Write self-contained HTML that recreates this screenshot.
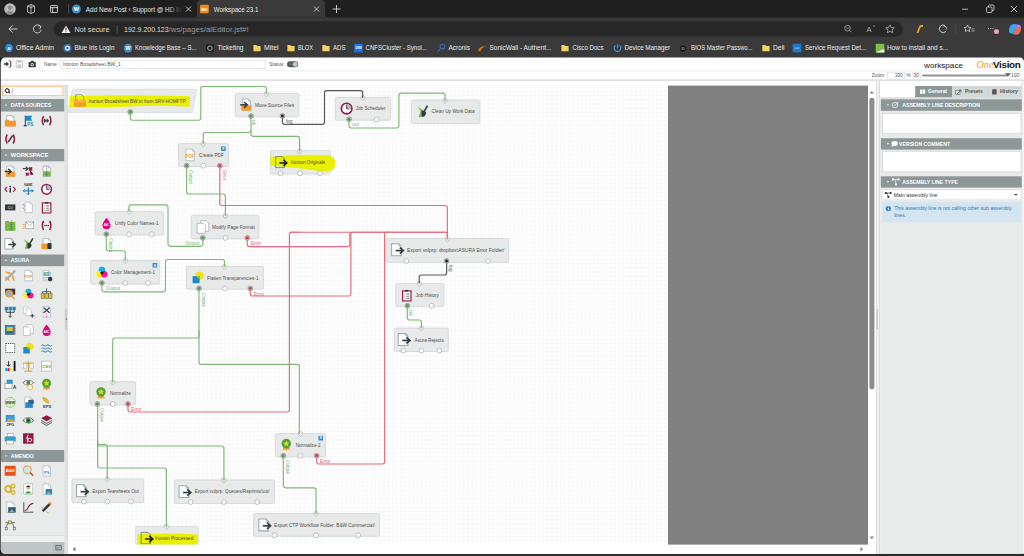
<!DOCTYPE html>
<html><head><meta charset="utf-8"><title>Workspace 23.1</title>
<style>html,body{margin:0;padding:0;background:#1c1c1c;overflow:hidden;width:1024px;height:556px}svg{display:block}</style>
</head><body>
<svg width="1024" height="556" viewBox="0 0 1024 556" font-family="Liberation Sans, sans-serif">
<rect x="0.00" y="0.00" width="1024.00" height="17.60" fill="#1f1f1f" />
<rect x="0.00" y="17.60" width="1024.00" height="40.40" fill="#3a3a3a" />
<path d="M193,17.6 Q197,17.6 197,13.6 V4 Q197,0 201,0 H321 Q325,0 325,4 V13.6 Q325,17.6 329,17.6 Z" fill="#3a3a3a" />
<circle cx="10.00" cy="9.00" r="5.80" fill="#b9b9b9" />
<circle cx="10.00" cy="7.60" r="2.20" fill="#8a8a8a" />
<path d="M6.2,12.8 Q10,8.5 13.8,12.8 Q10,15.5 6.2,12.8Z" fill="#8a8a8a" />
<path d="M27.5,6 L31,4.5 L34.5,6 V12 L31,13.5 L27.5,12Z M31,4.5 V13.5 M27.5,6 L31,7.5 L34.5,6" fill="none" stroke="#cfcfcf" stroke-width="0.8" />
<rect x="50.50" y="5.50" width="7.00" height="7.00" fill="none" stroke="#d8d8d8" stroke-width="0.9" rx="0.8" />
<line x1="50.50" y1="7.60" x2="57.50" y2="7.60" stroke="#d8d8d8" stroke-width="0.9" />
<line x1="52.60" y1="7.60" x2="52.60" y2="12.50" stroke="#d8d8d8" stroke-width="0.9" />
<line x1="68.60" y1="4.00" x2="68.60" y2="14.00" stroke="#555" stroke-width="0.8" />
<circle cx="76.40" cy="9.00" r="4.50" fill="#3d8ec8" />
<text x="76.40" y="10.97" font-size="5.50" fill="#fff" font-weight="bold" text-anchor="middle" >W</text>
<defs><linearGradient id="fade" gradientUnits="userSpaceOnUse" x1="168" y1="0" x2="182" y2="0"><stop offset="0" stop-color="#e6e6e6"/><stop offset="1" stop-color="#e6e6e6" stop-opacity="0"/></linearGradient></defs>
<clipPath id="tabclip"><rect x="80" y="0" width="102" height="18"/></clipPath><g clip-path="url(#tabclip)">
<text x="85.80" y="11.74" font-size="6.60" fill="url(#fade)" textLength="108" lengthAdjust="spacingAndGlyphs">Add New Post ‹ Support @ HD Media</text>
</g>
<path d="M186,6.5 L191,11.5 M191,6.5 L186,11.5" fill="none" stroke="#d0d0d0" stroke-width="0.9" />
<rect x="200.00" y="4.70" width="8.80" height="8.60" fill="#f08a10" rx="1" />
<text x="204.40" y="10.73" font-size="4.50" fill="#fff" font-weight="bold" text-anchor="middle" >wo</text>
<text x="213.80" y="11.74" font-size="6.60" fill="#ececec" textLength="44.6" lengthAdjust="spacingAndGlyphs">Workspace 23.1</text>
<path d="M314,6.5 L319,11.5 M319,6.5 L314,11.5" fill="none" stroke="#d0d0d0" stroke-width="0.9" />
<path d="M336.5,5 V13 M332.5,9 H340.5" fill="none" stroke="#d8d8d8" stroke-width="0.9" />
<line x1="962.00" y1="9.20" x2="968.00" y2="9.20" stroke="#d8d8d8" stroke-width="0.8" />
<rect x="986.50" y="7.00" width="5.50" height="5.50" fill="none" stroke="#d8d8d8" stroke-width="0.8" rx="1" />
<path d="M988.5,7 V6 Q988.5,5 989.5,5 H993 Q994,5 994,6 V9.5 Q994,10.5 993,10.5 H992" fill="none" stroke="#d8d8d8" stroke-width="0.8" />
<path d="M1011,6 L1017,12 M1017,6 L1011,12" fill="none" stroke="#d8d8d8" stroke-width="0.8" />
<path d="M9.5,29 H17.5 M12.5,25.5 L9,29 L12.5,32.5" fill="none" stroke="#d8d8d8" stroke-width="0.9" />
<path d="M40.5,26.5 A4,4 0 1 0 41.2,30" fill="none" stroke="#d8d8d8" stroke-width="0.9" />
<path d="M38.5,25 L41,26.6 L39.6,29" fill="none" stroke="#d8d8d8" stroke-width="0.9" />
<path d="M61,21 H895 A8,8 0 0 1 895,37 H61 A8,8 0 0 1 61,21Z" fill="#272727" stroke="#3e3e3e" stroke-width="0.6" />
<path d="M66,25.5 L70.5,33 H61.5Z" fill="#eeeeee" />
<line x1="66.00" y1="27.60" x2="66.00" y2="30.60" stroke="#272727" stroke-width="0.9" />
<circle cx="66.00" cy="31.80" r="0.50" fill="#272727" />
<text x="74.50" y="31.86" font-size="7.24" fill="#dedede" >Not secure</text>
<line x1="117.20" y1="25.00" x2="117.20" y2="33.00" stroke="#5a5a5a" stroke-width="0.8" />
<text x="124.00" y="31.92" font-size="7.40" fill="#dedede" textLength="44.6" lengthAdjust="spacingAndGlyphs">192.9.200.123</text>
<text x="168.60" y="31.92" font-size="7.40" fill="#9a9a9a" textLength="80" lengthAdjust="spacingAndGlyphs">/ws/pages/alEditor.jsf#!</text>
<circle cx="847.50" cy="28.20" r="2.80" fill="none" stroke="#a8a8a8" stroke-width="0.8" />
<line x1="849.50" y1="30.20" x2="851.50" y2="32.20" stroke="#a8a8a8" stroke-width="0.8" />
<line x1="846.20" y1="28.20" x2="848.80" y2="28.20" stroke="#a8a8a8" stroke-width="0.7" />
<text x="869.00" y="32.05" font-size="7.50" fill="#b0b0b0" text-anchor="middle" >A</text>
<text x="873.00" y="27.19" font-size="3.50" fill="#b0b0b0" >a</text>
<path d="M890,24.8 L891.3,27.6 L894.3,27.9 L892,29.9 L892.7,32.8 L890,31.3 L887.3,32.8 L888,29.9 L885.7,27.9 L888.7,27.6Z" fill="none" stroke="#b8b8b8" stroke-width="0.8" />
<path d="M917.5,33 L919.5,27.5 Q920,26 921.5,26 H923" fill="none" stroke="#f0a020" stroke-width="1.8" />
<path d="M945,25.5 A3.8,3.8 0 1 0 945.8,31.5" fill="none" stroke="#d0d0d0" stroke-width="1.0" />
<path d="M943.5,27 A1.6,1.6 0 1 1 946,29.5" fill="none" stroke="#d0d0d0" stroke-width="0.8" />
<line x1="955.80" y1="24.50" x2="955.80" y2="33.50" stroke="#555" stroke-width="0.7" />
<path d="M967.5,25 L968.6,27.3 L971,27.6 L969.2,29.2 L969.7,31.6 L967.5,30.4 L965.3,31.6 L965.8,29.2 L964,27.6 L966.4,27.3Z" fill="none" stroke="#d0d0d0" stroke-width="0.8" />
<line x1="971.50" y1="29.00" x2="974.50" y2="29.00" stroke="#d0d0d0" stroke-width="0.7" />
<line x1="971.50" y1="31.00" x2="974.50" y2="31.00" stroke="#d0d0d0" stroke-width="0.7" />
<circle cx="988.50" cy="28.50" r="0.60" fill="#d0d0d0" />
<circle cx="990.80" cy="28.50" r="0.60" fill="#d0d0d0" />
<circle cx="993.10" cy="28.50" r="0.60" fill="#d0d0d0" />
<circle cx="996.50" cy="31.50" r="2.60" fill="#e38a96" />
<text x="996.50" y="32.69" font-size="3.20" fill="#fff" text-anchor="middle" >8</text>
<path d="M1010,26 Q1012,23.5 1015,24 L1019.5,25 Q1021.5,26 1021,29 L1019.5,33 Q1018,35 1015.5,34.5 L1011,33.5 Q1008.5,32.5 1009,29.5Z" fill="#6a7ef0" />
<path d="M1013,24.2 L1016.5,25 L1014,31 Q1013,33.5 1010.5,33 Q1008.5,32 1009.5,29Z" fill="#27b4e8" />
<path d="M1016,27 L1021,28.5 Q1021,31 1019.5,33 Q1018,35 1015.5,34.5 L1013.5,34Z" fill="#f06a50" />
<path d="M1017,24.5 L1019.5,25 Q1021,26 1021,28 L1016,27Z" fill="#b080e8" />
<path d="M7,44.1 H11 L13.2,48.1 L11,52.1 H7 L4.8,48.1Z" fill="#2a8ae0" />
<text x="9.00" y="49.52" font-size="3.60" fill="#fff" font-weight="bold" text-anchor="middle" >AI</text>
<text x="16.00" y="50.48" font-size="7.00" fill="#ececec" textLength="38" lengthAdjust="spacingAndGlyphs">Office Admin</text>
<circle cx="67.50" cy="48.10" r="4.00" fill="#3b6fb6" />
<circle cx="67.50" cy="48.10" r="2.60" fill="#c8dcf0" />
<circle cx="67.50" cy="48.10" r="1.20" fill="#3b6fb6" />
<text x="74.50" y="50.48" font-size="7.00" fill="#ececec" textLength="40" lengthAdjust="spacingAndGlyphs">Blue Iris Login</text>
<circle cx="128.00" cy="48.10" r="4.30" fill="#3d8ec8" />
<text x="128.00" y="50.00" font-size="5.30" fill="#fff" font-weight="bold" text-anchor="middle" >W</text>
<text x="135.00" y="50.48" font-size="7.00" fill="#ececec" textLength="61.5" lengthAdjust="spacingAndGlyphs">Knowledge Base – S...</text>
<rect x="206.00" y="44.10" width="8.00" height="8.00" fill="#1f1f1f" rx="1.5" />
<circle cx="210.00" cy="48.10" r="2.30" fill="none" stroke="#cfcfcf" stroke-width="0.8" />
<text x="217.50" y="50.48" font-size="7.00" fill="#ececec" textLength="26" lengthAdjust="spacingAndGlyphs">Ticketing</text>
<path d="M253.4,45.1 H256.2 L257.2,46.1 H260.6 V51.300000000000004 H253.4Z" fill="#f4d35e" />
<text x="264.00" y="50.48" font-size="7.00" fill="#ececec" textLength="14.5" lengthAdjust="spacingAndGlyphs">Mitel</text>
<path d="M287.4,45.1 H290.2 L291.2,46.1 H294.6 V51.300000000000004 H287.4Z" fill="#f4d35e" />
<text x="298.00" y="50.48" font-size="7.00" fill="#ececec" textLength="15" lengthAdjust="spacingAndGlyphs">BLOX</text>
<path d="M322.4,45.1 H325.2 L326.2,46.1 H329.6 V51.300000000000004 H322.4Z" fill="#f4d35e" />
<text x="333.00" y="50.48" font-size="7.00" fill="#ececec" textLength="12.5" lengthAdjust="spacingAndGlyphs">ADS</text>
<rect x="354.20" y="43.80" width="8.60" height="8.60" fill="#1a73e8" />
<text x="358.50" y="49.25" font-size="2.80" fill="#fff" font-weight="bold" text-anchor="middle" >DSM</text>
<text x="365.50" y="50.48" font-size="7.00" fill="#ececec" textLength="61.5" lengthAdjust="spacingAndGlyphs">CNFSCluster - Synol...</text>
<circle cx="442.50" cy="46.60" r="2.30" fill="none" stroke="#3a6ab8" stroke-width="1.1" />
<line x1="440.80" y1="48.30" x2="437.50" y2="51.90" stroke="#3a6ab8" stroke-width="1.2" />
<text x="448.50" y="50.48" font-size="7.00" fill="#ececec" textLength="21.5" lengthAdjust="spacingAndGlyphs">Acronis</text>
<path d="M478.2,51.1 Q479,45.6 486,46.6 Q481,47.6 480.5,51.6Z" fill="#f07010" />
<text x="489.50" y="50.48" font-size="7.00" fill="#ececec" textLength="62" lengthAdjust="spacingAndGlyphs">SonicWall - Authent...</text>
<path d="M561.4,45.1 H564.2 L565.2,46.1 H568.6 V51.300000000000004 H561.4Z" fill="#f4d35e" />
<text x="572.50" y="50.48" font-size="7.00" fill="#ececec" textLength="31" lengthAdjust="spacingAndGlyphs">Cisco Docs</text>
<path d="M615.4,45.5 A3.3,3.3 0 1 0 619.6,45.5" fill="none" stroke="#3a9ae8" stroke-width="1.1" />
<line x1="617.50" y1="44.10" x2="617.50" y2="48.40" stroke="#3a9ae8" stroke-width="1.1" />
<text x="624.50" y="50.48" font-size="7.00" fill="#ececec" textLength="45.5" lengthAdjust="spacingAndGlyphs">Device Manager</text>
<circle cx="683.00" cy="48.60" r="3.20" fill="#1b1b1b" />
<text x="683.00" y="49.59" font-size="3.50" fill="#d8d8d8" text-anchor="middle" >ID</text>
<text x="691.00" y="50.48" font-size="7.00" fill="#ececec" textLength="61.5" lengthAdjust="spacingAndGlyphs">BIOS Master Passwo...</text>
<path d="M762.4,45.1 H765.2 L766.2,46.1 H769.6 V51.300000000000004 H762.4Z" fill="#f4d35e" />
<text x="773.00" y="50.48" font-size="7.00" fill="#ececec" textLength="11.5" lengthAdjust="spacingAndGlyphs">Dell</text>
<rect x="792.70" y="43.80" width="8.60" height="8.60" fill="#1e78d0" />
<line x1="794.50" y1="48.10" x2="799.50" y2="48.10" stroke="#cfe0f5" stroke-width="0.7" />
<text x="805.00" y="50.48" font-size="7.00" fill="#ececec" textLength="61" lengthAdjust="spacingAndGlyphs">Service Request Det...</text>
<rect x="875.70" y="43.80" width="8.60" height="8.60" fill="#7cc04a" />
<path d="M875.7,52.4 L884.3,49.1 V52.4Z" fill="#fff" />
<text x="887.00" y="50.48" font-size="7.00" fill="#ececec" textLength="61" lengthAdjust="spacingAndGlyphs">How to install and s...</text>
<rect x="0.00" y="553.00" width="1024.00" height="3.00" fill="#2c2c2c" />
<path d="M1,62 Q1,57.5 5.5,57.5 H1019.5 Q1024,57.5 1024,62 V549.5 Q1024,553.8 1019.5,553.8 H5.5 Q1,553.8 1,549.5Z" fill="#ffffff" />
<line x1="0.50" y1="62.00" x2="0.50" y2="550.00" stroke="#5e5e5e" stroke-width="1" />
<line x1="13.40" y1="58.00" x2="13.40" y2="69.50" stroke="#e4e4e4" stroke-width="0.7" />
<line x1="25.90" y1="58.00" x2="25.90" y2="69.50" stroke="#e4e4e4" stroke-width="0.7" />
<line x1="38.60" y1="58.00" x2="38.60" y2="69.50" stroke="#e4e4e4" stroke-width="0.7" />
<path d="M3.8,63.2 H6.2 V61.4 L9,64 L6.2,66.6 V64.8 H3.8Z" fill="#3a3a3a" />
<path d="M8.8,60.8 H9.6 Q10.8,60.8 10.8,62 V66 Q10.8,67.2 9.6,67.2 H8.8" fill="none" stroke="#3a3a3a" stroke-width="1.0" />
<rect x="16.20" y="60.40" width="6.40" height="7.20" fill="none" stroke="#c0c0c0" stroke-width="0.9" rx="0.6" />
<rect x="17.60" y="60.50" width="3.60" height="2.10" fill="#c0c0c0" />
<rect x="17.60" y="64.60" width="3.60" height="2.80" fill="#c8c8c8" />
<path d="M28.6,62 H30.6 L31.4,60.8 H33.4 L34.2,62 H35.8 V67.2 H28.6Z" fill="#3a3a3a" />
<circle cx="32.20" cy="64.60" r="1.60" fill="#ffffff" />
<circle cx="32.20" cy="64.60" r="0.90" fill="#3a3a3a" />
<text x="44.00" y="65.82" font-size="4.75" fill="#555" >Name:</text>
<rect x="60.30" y="60.30" width="204.90" height="8.30" fill="#fff" stroke="#d8dcdc" stroke-width="0.7" />
<text x="63.00" y="66.21" font-size="5.04" fill="#555" >Ironton Broadsheet BW_1</text>
<text x="269.30" y="65.86" font-size="4.88" fill="#555" >Status:</text>
<rect x="287.00" y="61.30" width="11.20" height="6.00" fill="#555d5d" rx="3" />
<circle cx="295.20" cy="64.30" r="2.40" fill="#c8cccc" />
<path d="M289.6,63.1 L291.4,65.3 M291.4,63.1 L289.6,65.3" fill="none" stroke="#888" stroke-width="0.5" />
<line x1="1.00" y1="70.80" x2="874.00" y2="70.80" stroke="#eceeee" stroke-width="0.9" />
<text x="924.00" y="67.89" font-size="7.90" fill="#151515" textLength="39" lengthAdjust="spacingAndGlyphs">workspace</text>
<text x="976.50" y="68.23" font-size="9.50" fill="#f0a01e" font-family="Liberation Serif" font-style="italic" textLength="17" lengthAdjust="spacingAndGlyphs">One</text>
<text x="993.00" y="68.26" font-size="9.60" fill="#111" font-weight="bold" textLength="27.5" lengthAdjust="spacingAndGlyphs" letter-spacing="-0.3">Vision</text>
<line x1="874.00" y1="70.80" x2="1024.00" y2="70.80" stroke="#eceeee" stroke-width="0.9" />
<text x="871.80" y="77.24" font-size="4.83" fill="#555" >Zoom:</text>
<rect x="887.60" y="72.20" width="16.70" height="6.80" fill="#fff" stroke="#d4d8d8" stroke-width="0.6" />
<text x="902.80" y="77.37" font-size="4.90" fill="#555" text-anchor="end" >100</text>
<text x="906.30" y="77.30" font-size="5.00" fill="#555" >%</text>
<rect x="912.80" y="72.20" width="7.80" height="6.80" fill="#fff" stroke="#e0e3e3" stroke-width="0.5" />
<text x="913.60" y="77.27" font-size="4.90" fill="#555" >30</text>
<rect x="922.00" y="74.60" width="86.00" height="2.00" fill="#8d9696" rx="1" />
<path d="M1005,73.2 H1011 L1008,76.6Z" fill="#555d5d" />
<text x="1011.00" y="77.27" font-size="4.90" fill="#555" >100</text>
<rect x="1010.40" y="72.20" width="11.10" height="6.80" fill="none" stroke="#e6e8e8" stroke-width="0.5" />
<rect x="1.00" y="79.30" width="1023.00" height="1.70" fill="#dedfdf" />
<rect x="1.00" y="84.50" width="63.20" height="451.50" fill="#e9ebea" />
<rect x="64.20" y="84.50" width="3.80" height="469.50" fill="#dfe0e0" />
<rect x="65.20" y="309.00" width="1.80" height="20.80" fill="#c9cbcb" />
<path d="M65.4,319 L66.8,317.8 V320.2Z" fill="#777" />
<rect x="2.60" y="86.50" width="60.30" height="9.10" fill="#fff" stroke="#f6c088" stroke-width="0.8" />
<path d="M7.2,88.6 A2,2 0 1 0 7.21,88.6" fill="none" stroke="#333" stroke-width="1" />
<circle cx="7.30" cy="90.60" r="1.90" fill="none" stroke="#333" stroke-width="0.9" />
<line x1="8.70" y1="92.00" x2="10.00" y2="93.30" stroke="#333" stroke-width="1.1" />
<line x1="12.30" y1="88.30" x2="12.30" y2="93.80" stroke="#888" stroke-width="0.6" />
<rect x="1.00" y="99.00" width="63.20" height="12.50" fill="#8d9797" />
<path d="M4.6,104.65 h2.6 l-1.3,1.4z" fill="#fff" />
<text x="10.80" y="107.11" font-size="5.17" fill="#fff" font-weight="bold" >DATA SOURCES</text>
<rect x="1.00" y="149.00" width="63.20" height="12.30" fill="#8d9797" />
<path d="M4.6,154.55 h2.6 l-1.3,1.4z" fill="#fff" />
<text x="10.80" y="157.22" font-size="5.74" fill="#fff" font-weight="bold" >WORKSPACE</text>
<rect x="1.00" y="254.50" width="63.20" height="11.70" fill="#8d9797" />
<path d="M4.6,259.75 h2.6 l-1.3,1.4z" fill="#fff" />
<text x="10.80" y="262.22" font-size="5.20" fill="#fff" font-weight="bold" >ASURA</text>
<rect x="1.00" y="450.00" width="63.20" height="12.00" fill="#8d9797" />
<path d="M4.6,455.4 h2.6 l-1.3,1.4z" fill="#fff" />
<text x="10.80" y="457.86" font-size="5.18" fill="#fff" font-weight="bold" >AMENDO</text>
<g transform="translate(4.20,114.70) scale(1.000)"><path d="M2.5,0.8 H8 L10,2.8 V11.2 H2.5 Z" fill="#fff" stroke="#8a9aa6" stroke-width="0.6"/><path d="M8,0.8 V2.8 H10" fill="none" stroke="#8a9aa6" stroke-width="0.5"/><rect x="0.8" y="6" width="11" height="5.8" fill="#f39a2b"/><rect x="0.8" y="5" width="4" height="1.5" fill="#f39a2b"/></g>
<g transform="translate(22.30,114.70) scale(1.000)"><path d="M3,1 V11" stroke="#2f3b42" stroke-width="1"/><path d="M3.5,1 H10 L8.5,3.5 L10,6 H3.5Z" fill="#1d87c8"/><rect x="1.5" y="10.5" width="3" height="1.2" fill="#2f3b42"/><text x="5" y="11.5" font-size="4.5" font-weight="bold" fill="#1d87c8">PS</text></g>
<g transform="translate(40.60,114.70) scale(1.000)"><path d="M3,1.5 Q0.5,6 3,10.5" fill="none" stroke="#9b1b4b" stroke-width="1.6"/><path d="M9,1.5 Q11.5,6 9,10.5" fill="none" stroke="#9b1b4b" stroke-width="1.6"/><path d="M3.4,3.6 L6,6 L3.4,8.4Z M6,3.6 L8.6,6 L6,8.4Z" fill="#2f3b42"/></g>
<g transform="translate(4.20,133.00) scale(1.000)"><path d="M3,1.5 Q0.5,6 3,10.5" fill="none" stroke="#9b1b4b" stroke-width="1.6"/><path d="M9,1.5 Q11.5,6 9,10.5" fill="none" stroke="#9b1b4b" stroke-width="1.6"/><path d="M4,9 L8.5,2.5" stroke="#2f3b42" stroke-width="1.4"/></g>
<g transform="translate(4.20,165.20) scale(1.000)"><path d="M2.5,0.8 H8 L10,2.8 V11.2 H2.5 Z" fill="#fff" stroke="#8a9aa6" stroke-width="0.6"/><path d="M8,0.8 V2.8 H10" fill="none" stroke="#8a9aa6" stroke-width="0.5"/><rect x="1.5" y="6.5" width="9.5" height="5" fill="#f39a2b"/><path d="M0.5,6.2 H6.5" stroke="#2f3b42" stroke-width="1.4"/><path d="M4.0,3.6 L7.0,6.2 L4.0,8.8" fill="none" stroke="#2f3b42" stroke-width="1.4"/></g>
<g transform="translate(22.30,165.20) scale(1.000)"><path d="M0.5,3.5 H5.300000000000001" stroke="#2f3b42" stroke-width="1.1199999999999999"/><path d="M3.3000000000000003,1.42 L5.7,3.5 L3.3000000000000003,5.58" fill="none" stroke="#2f3b42" stroke-width="1.1199999999999999"/><rect x="6.5" y="2" width="3.5" height="3.5" fill="#9b1b4b"/><path d="M8,5 V9 H11" stroke="#9b1b4b" stroke-width="1"/><rect x="3.5" y="7.5" width="3" height="3" fill="#9b1b4b"/></g>
<g transform="translate(40.60,165.20) scale(1.000)"><path d="M2.5,0.8 H8 L10,2.8 V11.2 H2.5 Z" fill="#fff" stroke="#8a9aa6" stroke-width="0.6"/><path d="M8,0.8 V2.8 H10" fill="none" stroke="#8a9aa6" stroke-width="0.5"/><rect x="2.5" y="6" width="7.5" height="5.2" fill="#7ab648"/><path d="M6,1 V11" stroke="#2f3b42" stroke-width="0.8" stroke-dasharray="0.8 0.8"/></g>
<g transform="translate(4.20,183.30) scale(1.000)"><path d="M3,3.5 L0.8,6 L3,8.5 M9,3.5 L11.2,6 L9,8.5" fill="none" stroke="#9b1b4b" stroke-width="1.1"/><rect x="5.3" y="4.8" width="1.5" height="4.5" fill="#2f3b42"/><circle cx="6" cy="3.2" r="0.9" fill="#2f3b42"/></g>
<g transform="translate(22.30,183.30) scale(1.000)"><text x="6" y="2.8" font-size="2.8" font-weight="bold" fill="#2f3b42" text-anchor="middle">NAME</text><path d="M1,7.5 H11 M6,4 V11.5" stroke="#1d87c8" stroke-width="1.2"/><path d="M2.5,6 L1,7.5 L2.5,9 M9.5,6 L11,7.5 L9.5,9 M4.5,10 L6,11.5 L7.5,10" fill="none" stroke="#1d87c8" stroke-width="1"/></g>
<g transform="translate(40.60,183.30) scale(1.000)"><circle cx="6" cy="6" r="4.9" fill="#fff" stroke="#9b1b4b" stroke-width="1.5"/><path d="M6,6 V1.9 A4.1,4.1 0 0 1 10.1,6Z" fill="#b4bec6"/><path d="M6,2.6 V6.2 H8.6" fill="none" stroke="#2f3b42" stroke-width="0.8"/><path d="M6,1.6 v0.9 M6,9.5 v0.9 M1.6,6 h0.9 M9.5,6 h0.9" stroke="#2f3b42" stroke-width="0.5"/></g>
<g transform="translate(4.20,201.40) scale(1.000)"><rect x="0.8" y="3" width="10.4" height="6" fill="#2f3b42"/><text x="6" y="7.5" font-size="3.5" fill="#fff" text-anchor="middle">C:/</text></g>
<g transform="translate(22.30,201.40) scale(1.000)"><path d="M2.5,0.8 H8 L10,2.8 V11.2 H2.5 Z" fill="#fff" stroke="#aab" stroke-width="0.6"/><path d="M8,0.8 V2.8 H10" fill="none" stroke="#aab" stroke-width="0.5"/><path d="M0.5,3 h1 M1.5,5 h1 M0.5,7 h1 M1.5,9 h1 M3,4 h1 M3,8 h1" stroke="#8a9aa6" stroke-width="0.9"/></g>
<g transform="translate(40.60,201.40) scale(1.000)"><rect x="1.8" y="1.5" width="8.4" height="10" fill="#fff" stroke="#9b1b4b" stroke-width="1.2"/><rect x="4.5" y="0.6" width="3" height="1.6" fill="#2f3b42"/><path d="M3.5,4.5 h1 M3.5,6.8 h1 M3.5,9 h1" stroke="#7ab648" stroke-width="0.9"/><path d="M5.5,4.5 h3 M5.5,6.8 h3 M5.5,9 h3" stroke="#2f3b42" stroke-width="0.7"/></g>
<g transform="translate(4.20,219.50) scale(1.000)"><rect x="0.8" y="2.5" width="10.4" height="8.8" fill="#7ab648"/><rect x="0.8" y="1.5" width="4" height="1.5" fill="#7ab648"/><path d="M7,1 V11" stroke="#2f3b42" stroke-width="0.9" stroke-dasharray="0.9 0.9"/></g>
<g transform="translate(22.30,219.50) scale(1.000)"><rect x="3.5" y="2.5" width="8" height="6.5" fill="#fff" stroke="#7a8a96" stroke-width="0.6"/><path d="M3.5,2.5 L7.5,6 L11.5,2.5" fill="none" stroke="#7a8a96" stroke-width="0.6"/><path d="M0.5,5 h2 M1,7 h2 M0.5,9 h2" stroke="#f39a2b" stroke-width="0.8"/></g>
<g transform="translate(40.60,219.50) scale(1.000)"><path d="M3,1.5 Q0.5,6 3,10.5" fill="none" stroke="#9b1b4b" stroke-width="1.6"/><path d="M9,1.5 Q11.5,6 9,10.5" fill="none" stroke="#9b1b4b" stroke-width="1.6"/><circle cx="4.3" cy="6" r="0.8" fill="#2f3b42"/><circle cx="6" cy="6" r="0.8" fill="#2f3b42"/><circle cx="7.7" cy="6" r="0.8" fill="#2f3b42"/></g>
<g transform="translate(4.20,237.60) scale(1.000)"><path d="M0.6,0.8 H7 L9.2,3 V11.4 H0.6 Z" fill="#fff" stroke="#9aa6ac" stroke-width="0.9"/><path d="M7,0.8 V3 H9.2" fill="none" stroke="#9aa6ac" stroke-width="0.6"/><path d="M4.2,6.9 H10.5" stroke="#2f3b42" stroke-width="1.47"/><path d="M7.875,4.17 L11.025,6.9 L7.875,9.63" fill="none" stroke="#2f3b42" stroke-width="1.47"/></g>
<g transform="translate(22.30,237.60) scale(1.000)"><path d="M1.2,1.5 L4.2,5.5 L2.6,11 Q5.5,12 6.8,9 L6.2,4.6 Z" fill="#7ab648"/><path d="M10.6,0.8 L7.8,5.6" stroke="#2f3b42" stroke-width="1.5"/><path d="M5.2,5.4 Q9,4.6 9.2,7.6 Q8.6,11.2 5.2,11 Z" fill="#2f3b42"/></g>
<g transform="translate(40.60,237.60) scale(1.000)"><path d="M2.5,0.8 H8 L10,2.8 V11.2 H2.5 Z" fill="#fff" stroke="#8a9aa6" stroke-width="0.6"/><path d="M8,0.8 V2.8 H10" fill="none" stroke="#8a9aa6" stroke-width="0.5"/><rect x="0.8" y="6" width="10.4" height="5.5" fill="#f39a2b"/><rect x="6.8" y="5.5" width="4" height="5.8" rx="0.6" fill="#2f3b42"/></g>
<g transform="translate(4.20,269.60) scale(1.000)"><path d="M1.8,10.2 L10.6,1.4" stroke="#9fb0b0" stroke-width="2.1" stroke-linecap="round"/><path d="M5.6,4.6 L0.6,2.6 L1.2,1.6 L7,3.2Z M7.4,6.4 L9.2,11.6 L10.4,11 L8.8,5Z M3.2,8.8 L0.6,7.8 L1,6.8 L3.8,7.6Z M3.2,8.8 L4.2,11.4 L5.2,11 L4.4,8.2Z" fill="#f39a2b"/></g>
<g transform="translate(22.30,269.60) scale(1.000)"><path d="M2.5,0.8 H8 L10,2.8 V11.2 H2.5 Z" fill="#fff" stroke="#9aa8b0" stroke-width="0.6"/><path d="M8,0.8 V2.8 H10" fill="none" stroke="#9aa8b0" stroke-width="0.5"/><text x="6.2" y="8.8" font-size="4" font-weight="bold" fill="#f39a2b" text-anchor="middle">PDF</text></g>
<g transform="translate(40.60,269.60) scale(1.000)"><path d="M2.5,0.8 H8 L10,2.8 V11.2 H2.5 Z" fill="#fff" stroke="#9aa8b0" stroke-width="0.6"/><path d="M8,0.8 V2.8 H10" fill="none" stroke="#9aa8b0" stroke-width="0.5"/><rect x="3" y="2.5" width="6" height="4" fill="#5bb0d8"/><circle cx="6" cy="4.5" r="1.3" fill="#e5c520"/><path d="M3,8 h5 M3,9.5 h4" stroke="#889" stroke-width="0.6"/><circle cx="9.5" cy="9.5" r="2.3" fill="#2f3b42"/></g>
<g transform="translate(4.20,287.70) scale(1.000)"><rect x="1" y="1" width="10" height="6" fill="#2f3b42"/><circle cx="5" cy="6" r="3.5" fill="#8fb0c8" stroke="#f39a2b" stroke-width="1"/><path d="M7.5,8.5 L10.5,11.5" stroke="#f39a2b" stroke-width="1.4"/></g>
<g transform="translate(22.30,287.70) scale(1.000)"><circle cx="6" cy="4" r="3" fill="#00aeef" opacity="0.95"/><circle cx="3.8" cy="7.8" r="3" fill="#fff200" opacity="0.95"/><circle cx="8.2" cy="7.8" r="3" fill="#ec008c" opacity="0.9"/><circle cx="6" cy="6.6" r="1.4" fill="#111"/></g>
<g transform="translate(40.60,287.70) scale(1.000)"><path d="M6,0.5 V4 M2,4 H10 M2,4 V6 M6,4 V6 M10,4 V6" stroke="#2f3b42" stroke-width="0.8"/><rect x="0.5" y="6" width="3.3" height="5" fill="#e3c21f" stroke="#2f3b42" stroke-width="0.4"/><rect x="4.35" y="6" width="3.3" height="5" fill="#e3c21f" stroke="#2f3b42" stroke-width="0.4"/><rect x="8.2" y="6" width="3.3" height="5" fill="#e3c21f" stroke="#2f3b42" stroke-width="0.4"/></g>
<g transform="translate(4.20,305.80) scale(1.000)"><rect x="0.5" y="1" width="3.3" height="3.5" fill="#2d7fb8"/><rect x="4.35" y="1" width="3.3" height="3.5" fill="#2d7fb8"/><rect x="8.2" y="1" width="3.3" height="3.5" fill="#2d7fb8"/><path d="M2,4.5 V6.5 H10 V4.5 M6,4.5 V11.5 M4.5,10 L6,11.5 L7.5,10" fill="none" stroke="#2f3b42" stroke-width="0.9"/></g>
<g transform="translate(22.30,305.80) scale(1.000)"><path d="M1,1 H5 L6.5,2.5 V8 H1Z" fill="#fff" stroke="#9aa8b0" stroke-width="0.5"/><path d="M3.5,3 H7.5 L9,4.5 V10 H3.5Z" fill="#fff" stroke="#9aa8b0" stroke-width="0.5"/><path d="M8,10 H12 M10,8 V12" stroke="#2f3b42" stroke-width="0.9"/></g>
<g transform="translate(40.60,305.80) scale(1.000)"><path d="M2.5,0.8 H8 L10,2.8 V11.2 H2.5 Z" fill="#fff" stroke="#9aa8b0" stroke-width="0.6"/><path d="M8,0.8 V2.8 H10" fill="none" stroke="#9aa8b0" stroke-width="0.5"/><path d="M3,2 L9,7 M9,2 L3,7" stroke="#2f3b42" stroke-width="1.2"/><path d="M6,7 V12" stroke="#e0008c" stroke-width="0.8" stroke-dasharray="0.8 0.8"/></g>
<g transform="translate(4.20,323.90) scale(1.000)"><rect x="1" y="1.5" width="9" height="9" fill="#1f8ac8" stroke="#2f3b42" stroke-width="0.5"/><rect x="2.5" y="3" width="6" height="4" fill="#e6c220"/><path d="M2.5,8.5 h6" stroke="#2f3b42" stroke-width="0.6"/><path d="M11,1 V11" stroke="#e0008c" stroke-width="0.9" stroke-dasharray="0.8 0.8"/></g>
<g transform="translate(22.30,323.90) scale(1.000)"><path d="M4,0.8 H9 L11,2.8 V10 H4Z" fill="#fff" stroke="#9aa8b0" stroke-width="0.6"/><path d="M1,3 H6.5 L8,4.5 V11.5 H1Z" fill="#fff" stroke="#9aa8b0" stroke-width="0.6"/></g>
<g transform="translate(40.60,323.90) scale(1.000)"><path d="M6,0.5 Q10.5,6 10,8 A4,4 0 0 1 2,8 Q1.5,6 6,0.5Z" fill="#e4007c"/><text x="6" y="9" font-size="2.6" font-weight="bold" fill="#fff" text-anchor="middle">ABC</text></g>
<g transform="translate(4.20,342.00) scale(1.000)"><rect x="1.5" y="1.5" width="9" height="9" fill="#fff" stroke="#2f3b42" stroke-width="0.9" stroke-dasharray="1.2 1"/></g>
<g transform="translate(22.30,342.00) scale(1.000)"><circle cx="7.5" cy="4.5" r="3.8" fill="#f2e21b"/><rect x="1" y="5" width="6.5" height="6.5" fill="#1f8ac8"/><path d="M4.5,5 H7.5 V7.8 A3.8,3.8 0 0 1 4.5,5Z" fill="#8cc850"/></g>
<g transform="translate(40.60,342.00) scale(1.000)"><path d="M0.8,3.5 q1.3,-1.3 2.6,0 t2.6,0 t2.6,0 t2.6,0 M0.8,6.5 q1.3,-1.3 2.6,0 t2.6,0 t2.6,0 t2.6,0 M0.8,9.5 q1.3,-1.3 2.6,0 t2.6,0 t2.6,0 t2.6,0" fill="none" stroke="#2d7fb8" stroke-width="1"/></g>
<g transform="translate(4.20,360.10) scale(1.000)"><rect x="1" y="8" width="2" height="3" fill="#00aeef"/><rect x="3.3" y="8" width="2" height="3" fill="#ec008c"/><rect x="5.6" y="8" width="2" height="3" fill="#fff200"/><rect x="9.5" y="1" width="1.8" height="10" fill="#111"/><path d="M4.3,1 V6 M2.5,4.3 L4.3,6.3 L6.1,4.3" fill="none" stroke="#2f3b42" stroke-width="1"/></g>
<g transform="translate(22.30,360.10) scale(1.000)"><path d="M6,1 V11 M2,11 H10 M1,3 H11" stroke="#d89a2a" stroke-width="1"/><rect x="1" y="3.5" width="3.5" height="4.5" fill="#fff" stroke="#9aa8b0" stroke-width="0.5"/><rect x="7.5" y="3.5" width="3.5" height="4.5" fill="#fff" stroke="#9aa8b0" stroke-width="0.5"/></g>
<g transform="translate(40.60,360.10) scale(1.000)"><rect x="1" y="1" width="10" height="10" fill="#fff" stroke="#9aa8b0" stroke-width="0.6"/><text x="6" y="7.7" font-size="4.3" font-weight="bold" fill="#5e9c2a" text-anchor="middle">CSV</text></g>
<g transform="translate(4.20,378.20) scale(1.000)"><rect x="0.8" y="5" width="7" height="5.5" fill="#fff" stroke="#7a8a96" stroke-width="0.6"/><rect x="2.5" y="1.5" width="6" height="4" fill="#3a8fd0"/><text x="8.5" y="10.5" font-size="5" font-weight="bold" fill="#2f3b42">A</text></g>
<g transform="translate(22.30,378.20) scale(1.000)"><path d="M0.5,4.5 Q6,-0.5 11.5,4.5 Q6,9.5 0.5,4.5Z" fill="#fff" stroke="#2f3b42" stroke-width="0.6"/><circle cx="6" cy="4.5" r="2" fill="#3f8f3a"/><circle cx="8" cy="9" r="2.5" fill="#fff" stroke="#e0a020" stroke-width="0.8"/></g>
<g transform="translate(40.60,378.20) scale(1.000)"><path d="M3.5,7 L2.5,11.5 L4.5,10.5 L6,12 L7.5,10.5 L9.5,11.5 L8.5,7Z" fill="#f39a2b"/><circle cx="6" cy="5" r="4.5" fill="#4aa53a"/><path d="M6,2 L6.9,4 L9,4.2 L7.4,5.6 L7.9,7.8 L6,6.6 L4.1,7.8 L4.6,5.6 L3,4.2 L5.1,4Z" fill="#f2d21b"/></g>
<g transform="translate(4.20,396.30) scale(1.000)"><circle cx="6" cy="6" r="5" fill="#fff" stroke="#8cc850" stroke-width="0.9"/><path d="M1,6 H11 M6,1 V11 M2,3.5 H10 M2,8.5 H10" stroke="#8cc850" stroke-width="0.5"/><text x="6" y="7.3" font-size="3.4" font-weight="bold" fill="#2f3b42" text-anchor="middle">WWW</text></g>
<g transform="translate(22.30,396.30) scale(1.000)"><path d="M2.5,0.8 H8 L10,2.8 V11.2 H2.5 Z" fill="#fff" stroke="#9aa8b0" stroke-width="0.6"/><path d="M8,0.8 V2.8 H10" fill="none" stroke="#9aa8b0" stroke-width="0.5"/><rect x="3" y="6" width="7.5" height="5.5" fill="#1f8ac8"/><rect x="6" y="3.5" width="5.5" height="4" fill="#3a5f8a"/></g>
<g transform="translate(40.60,396.30) scale(1.000)"><path d="M2,1 Q9,2 8,7 Q3,6 2,1Z" fill="#e6c220" stroke="#998020" stroke-width="0.4"/><text x="6.5" y="11.5" font-size="4" font-weight="bold" fill="#2f3b42" text-anchor="middle">EPS</text></g>
<g transform="translate(4.20,414.40) scale(1.000)"><rect x="1.5" y="0.5" width="9" height="7" fill="#3a9ad8"/><path d="M2.5,7 L5,4 L7,6 L8.5,4.5 L10,7Z" fill="#f0b030"/><text x="6" y="11.8" font-size="4" font-weight="bold" fill="#2f3b42" text-anchor="middle">JPG</text></g>
<g transform="translate(22.30,414.40) scale(1.000)"><path d="M0.5,6 Q6,0.5 11.5,6 Q6,11.5 0.5,6Z" fill="#fff" stroke="#2f3b42" stroke-width="0.7"/><circle cx="6" cy="6" r="2.5" fill="#3f8f3a"/><circle cx="6" cy="6" r="1" fill="#111"/></g>
<g transform="translate(40.60,414.40) scale(1.000)"><path d="M6,0.8 L11.5,3.8 L6,6.8 L0.5,3.8Z" fill="#8a1840"/><path d="M0.5,6 L6,9 L11.5,6 M0.5,8 L6,11 L11.5,8" fill="none" stroke="#2f3b42" stroke-width="0.8"/></g>
<g transform="translate(4.20,432.50) scale(1.000)"><rect x="3" y="0.8" width="6" height="3.5" fill="#fff" stroke="#7a8a96" stroke-width="0.5"/><rect x="0.5" y="4" width="11" height="5" rx="0.8" fill="#2aa0d8"/><rect x="2.5" y="8" width="7" height="3.5" fill="#fff" stroke="#7a8a96" stroke-width="0.5"/></g>
<g transform="translate(22.30,432.50) scale(1.000)"><rect x="0.8" y="0.8" width="10.4" height="10.4" fill="#8e1840"/><path d="M5,10 V4 Q5,2.5 6.5,2.5 M3.5,5.5 H6" fill="none" stroke="#fff" stroke-width="0.8"/><circle cx="7.5" cy="7.5" r="1.8" fill="none" stroke="#fff" stroke-width="0.8"/></g>
<g transform="translate(4.20,464.80) scale(1.000)"><rect x="0.5" y="1" width="11" height="10" fill="#e8531d"/><text x="6" y="7.5" font-size="5" font-weight="bold" fill="#fff" text-anchor="middle">aun</text></g>
<g transform="translate(22.30,464.80) scale(1.000)"><circle cx="5" cy="5" r="4" fill="#cfe6f2" stroke="#f39a2b" stroke-width="1"/><path d="M7.8,7.8 L11,11" stroke="#d0502a" stroke-width="1.6"/></g>
<g transform="translate(40.60,464.80) scale(1.000)"><path d="M2.5,0.8 H8 L10,2.8 V11.2 H2.5 Z" fill="#fff" stroke="#9aa8b0" stroke-width="0.6"/><path d="M8,0.8 V2.8 H10" fill="none" stroke="#9aa8b0" stroke-width="0.5"/><text x="6.2" y="9" font-size="4.2" font-weight="bold" fill="#2a8ac8" text-anchor="middle">PS</text></g>
<g transform="translate(4.20,483.00) scale(1.000)"><circle cx="4" cy="6" r="3" fill="none" stroke="#e0b020" stroke-width="1.8"/><circle cx="9" cy="3" r="1.8" fill="none" stroke="#e0b020" stroke-width="1.2"/><circle cx="9" cy="9.5" r="1.8" fill="none" stroke="#e0b020" stroke-width="1.2"/></g>
<g transform="translate(22.30,483.00) scale(1.000)"><rect x="1.5" y="0.8" width="9" height="10.4" fill="#fff" stroke="#9aa8b0" stroke-width="0.5"/><circle cx="6" cy="4.5" r="2.2" fill="#e2b090"/><path d="M3.8,4 Q6,0.8 8.2,4Z" fill="#222"/><path d="M2.8,10.5 Q6,5.5 9.2,10.5Z" fill="#3aa040"/></g>
<g transform="translate(40.60,483.00) scale(1.000)"><path d="M2.5,0.8 H8 L10,2.8 V11.2 H2.5 Z" fill="#fff" stroke="#9aa8b0" stroke-width="0.6"/><path d="M8,0.8 V2.8 H10" fill="none" stroke="#9aa8b0" stroke-width="0.5"/><rect x="5" y="6" width="6.5" height="5.5" fill="#1f8ac8"/><path d="M6,11 L8,8.5 L10.5,11Z" fill="#f39a2b"/></g>
<g transform="translate(4.20,501.20) scale(1.000)"><path d="M2.5,0.8 H8 L10,2.8 V11.2 H2.5 Z" fill="#fff" stroke="#9aa8b0" stroke-width="0.6"/><path d="M8,0.8 V2.8 H10" fill="none" stroke="#9aa8b0" stroke-width="0.5"/><rect x="4" y="6" width="7.5" height="5.5" fill="#1f5f90"/><path d="M5,11 L7.5,8 L10.5,11Z" fill="#f39a2b"/></g>
<g transform="translate(22.30,501.20) scale(1.000)"><path d="M1.5,1 V11 H11" fill="none" stroke="#555" stroke-width="1"/><path d="M2.5,9.5 Q5,9 6,6 Q7.5,2.5 11,2" fill="none" stroke="#8e1840" stroke-width="1.1"/></g>
<g transform="translate(40.60,501.20) scale(1.000)"><path d="M2,10 L9,3" stroke="#2f3b42" stroke-width="2.6"/><path d="M9,3 L10.5,1.5" stroke="#f39a2b" stroke-width="2.6"/><path d="M1,6 L3,8 M6,10 L8,12 M8,1 L11,4" stroke="#f39a2b" stroke-width="1"/></g>
<g transform="translate(4.20,519.40) scale(1.000)"><path d="M1,3 H11 M4,3 L2,8 M8,3 L10,8" stroke="#2f3b42" stroke-width="0.6"/><rect x="4.5" y="1.5" width="3" height="3" fill="#f2e21b" stroke="#2f3b42" stroke-width="0.4"/><rect x="1" y="8" width="2" height="2.5" fill="#fff" stroke="#2f3b42" stroke-width="0.5"/><rect x="9" y="8" width="2" height="2.5" fill="#fff" stroke="#2f3b42" stroke-width="0.5"/></g>
<rect x="1.00" y="535.40" width="63.20" height="0.80" fill="#d6d9d9" />
<rect x="1.00" y="536.20" width="63.20" height="5.80" fill="#eef0f0" />
<path d="M1,542 H64.2 V553.8 H5.5 Q1,553.8 1,549.5Z" fill="#c0c5c7" />
<rect x="52.80" y="542.00" width="11.40" height="11.80" fill="#b9bec0" />
<path d="M55.8,545.5 H61.3 V549.8 H55.8Z" fill="none" stroke="#5a6060" stroke-width="0.8" />
<path d="M56.6,547.8 h2.5 l1,-1" fill="none" stroke="#5a6060" stroke-width="0.6" />
<rect x="868.00" y="81.00" width="8.20" height="473.00" fill="#ffffff" />
<path d="M869.5,93.6 H874.1 L871.8,90.9Z" fill="#8a8a8a" />
<rect x="869.40" y="97.80" width="5.00" height="291.70" fill="#8c8c8c" rx="2.4" />
<path d="M869.5,536.6 H874.1 L871.8,539.3Z" fill="#8a8a8a" />
<rect x="876.20" y="81.00" width="4.00" height="473.00" fill="#f4f5f5" />
<line x1="876.80" y1="81.00" x2="876.80" y2="554.00" stroke="#d2d4d4" stroke-width="0.9" />
<line x1="879.40" y1="81.00" x2="879.40" y2="554.00" stroke="#d2d4d4" stroke-width="0.9" />
<rect x="876.40" y="309.00" width="1.50" height="20.00" fill="#c9cbcb" />
<rect x="880.20" y="81.00" width="141.60" height="472.80" fill="#e9ebea" />
<rect x="880.20" y="81.00" width="141.60" height="5.00" fill="#ffffff" />
<rect x="880.20" y="86.00" width="35.00" height="11.50" fill="#ffffff" />
<rect x="1021.80" y="81.00" width="2.20" height="472.80" fill="#f4f4f4" />
<line x1="1021.90" y1="81.00" x2="1021.90" y2="553.80" stroke="#d8dbdb" stroke-width="0.5" />
<rect x="915.20" y="86.00" width="36.80" height="11.40" fill="#8d9797" />
<rect x="952.00" y="86.00" width="36.00" height="11.40" fill="#d3d8d8" />
<rect x="988.00" y="86.00" width="33.80" height="11.40" fill="#d3d8d8" />
<line x1="988.00" y1="86.00" x2="988.00" y2="97.40" stroke="#c4c9c9" stroke-width="0.5" />
<rect x="920.00" y="89.60" width="5.20" height="4.20" fill="#fff" />
<line x1="922.60" y1="89.60" x2="922.60" y2="93.80" stroke="#8d9797" stroke-width="0.5" />
<text x="928.00" y="93.23" font-size="5.10" fill="#fff" font-weight="bold" >General</text>
<path d="M957,94 L961,90 M959,90 h2 v2" fill="none" stroke="#555" stroke-width="0.7" />
<rect x="955.80" y="90.20" width="4.20" height="4.20" fill="none" stroke="#555" stroke-width="0.5" />
<text x="965.00" y="93.17" font-size="4.93" fill="#4d5555" font-weight="bold" >Presets</text>
<rect x="992.20" y="89.20" width="4.40" height="5.20" fill="#555" rx="0.5" />
<text x="1000.00" y="93.27" font-size="5.20" fill="#4d5555" font-weight="bold" >History</text>
<rect x="880.80" y="97.40" width="141.00" height="1.90" fill="#dadede" />
<rect x="880.80" y="99.30" width="141.00" height="11.50" fill="#8d9797" />
<path d="M886.6,104.45 h2.6 l-1.3,1.4z" fill="#fff" />
<circle cx="895.00" cy="105.05" r="2.80" fill="none" stroke="#fff" stroke-width="0.7" />
<line x1="894.00" y1="106.05" x2="898.50" y2="102.05" stroke="#fff" stroke-width="0.8" />
<text x="902.30" y="106.90" font-size="5.15" fill="#fff" font-weight="bold" >ASSEMBLY LINE DESCRIPTION</text>
<rect x="882.40" y="113.40" width="138.60" height="20.00" fill="#fff" stroke="#cfd3d3" stroke-width="0.7" />
<rect x="880.80" y="138.20" width="141.00" height="11.40" fill="#8d9797" />
<path d="M886.6,143.29999999999998 h2.6 l-1.3,1.4z" fill="#fff" />
<ellipse cx="894.6" cy="143.59999999999997" rx="3.2" ry="2.5" fill="#fff"/>
<path d="M892.2,145.09999999999997 l-0.8,1.8 l2.6,-1.2z" fill="#fff" />
<text x="899.10" y="145.75" font-size="5.13" fill="#fff" font-weight="bold" >VERSION COMMENT</text>
<rect x="882.40" y="151.20" width="138.60" height="20.70" fill="#fff" stroke="#cfd3d3" stroke-width="0.7" />
<rect x="880.80" y="176.30" width="141.00" height="11.30" fill="#8d9797" />
<path d="M886.6,181.35 h2.6 l-1.3,1.4z" fill="#fff" />
<rect x="892.00" y="178.45" width="2.00" height="2.00" fill="#fff" />
<rect x="897.50" y="178.45" width="2.00" height="2.00" fill="#fff" />
<rect x="895.00" y="183.45" width="2.00" height="2.00" fill="#fff" />
<path d="M893,179.45 H898.5 M895,179.45 L896,184.45" fill="none" stroke="#fff" stroke-width="0.6" />
<text x="902.30" y="183.79" font-size="5.12" fill="#fff" font-weight="bold" >ASSEMBLY LINE TYPE</text>
<rect x="882.20" y="190.00" width="138.80" height="9.60" fill="#fff" stroke="#dde0e0" stroke-width="0.5" />
<rect x="884.90" y="192.10" width="1.80" height="1.80" fill="#222" />
<rect x="889.70" y="192.10" width="1.80" height="1.80" fill="#222" />
<rect x="887.50" y="196.10" width="1.80" height="1.80" fill="#222" />
<path d="M885.8,193.0 H890.6 M887,193.0 L888.4,197.0" fill="none" stroke="#222" stroke-width="0.6" />
<text x="893.80" y="196.65" font-size="5.14" fill="#333" >Main assembly line</text>
<path d="M1014.2,194 h3.4 l-1.7,1.8z" fill="#333" />
<rect x="882.20" y="201.70" width="138.80" height="20.70" fill="#d5e4f1" />
<circle cx="888.30" cy="208.60" r="2.60" fill="#2f86c0" />
<rect x="887.90" y="207.90" width="0.80" height="2.50" fill="#fff" />
<circle cx="888.30" cy="206.80" r="0.45" fill="#fff" />
<text x="894.20" y="210.34" font-size="5.13" fill="#2b7cb5" >This assembly line is not calling other sub assembly</text>
<text x="894.20" y="217.04" font-size="5.13" fill="#2b7cb5" >lines.</text>
<rect x="68.00" y="81.00" width="800.00" height="473.00" fill="#ffffff" />
<path d="M539.40,85.6V544.6M535.20,85.6V544.6M531.00,85.6V544.6M526.80,85.6V544.6M522.60,85.6V544.6M518.40,85.6V544.6M514.20,85.6V544.6M510.00,85.6V544.6M505.80,85.6V544.6M501.60,85.6V544.6M497.40,85.6V544.6M493.20,85.6V544.6M489.00,85.6V544.6M484.80,85.6V544.6M480.60,85.6V544.6M476.40,85.6V544.6M472.20,85.6V544.6M468.00,85.6V544.6M463.80,85.6V544.6M459.60,85.6V544.6M455.40,85.6V544.6M451.20,85.6V544.6M447.00,85.6V544.6M442.80,85.6V544.6M438.60,85.6V544.6M434.40,85.6V544.6M430.20,85.6V544.6M426.00,85.6V544.6M421.80,85.6V544.6M417.60,85.6V544.6M413.40,85.6V544.6M409.20,85.6V544.6M405.00,85.6V544.6M400.80,85.6V544.6M396.60,85.6V544.6M392.40,85.6V544.6M388.20,85.6V544.6M384.00,85.6V544.6M379.80,85.6V544.6M375.60,85.6V544.6M371.40,85.6V544.6M367.20,85.6V544.6M363.00,85.6V544.6M358.80,85.6V544.6M354.60,85.6V544.6M350.40,85.6V544.6M346.20,85.6V544.6M342.00,85.6V544.6M337.80,85.6V544.6M333.60,85.6V544.6M329.40,85.6V544.6M325.20,85.6V544.6M321.00,85.6V544.6M316.80,85.6V544.6M312.60,85.6V544.6M308.40,85.6V544.6M304.20,85.6V544.6M300.00,85.6V544.6M295.80,85.6V544.6M291.60,85.6V544.6M287.40,85.6V544.6M283.20,85.6V544.6M279.00,85.6V544.6M274.80,85.6V544.6M270.60,85.6V544.6M266.40,85.6V544.6M262.20,85.6V544.6M258.00,85.6V544.6M253.80,85.6V544.6M249.60,85.6V544.6M245.40,85.6V544.6M241.20,85.6V544.6M237.00,85.6V544.6M232.80,85.6V544.6M228.60,85.6V544.6M224.40,85.6V544.6M220.20,85.6V544.6M216.00,85.6V544.6M211.80,85.6V544.6M207.60,85.6V544.6M203.40,85.6V544.6M199.20,85.6V544.6M195.00,85.6V544.6M190.80,85.6V544.6M186.60,85.6V544.6M182.40,85.6V544.6M178.20,85.6V544.6M174.00,85.6V544.6M169.80,85.6V544.6M165.60,85.6V544.6M161.40,85.6V544.6M157.20,85.6V544.6M153.00,85.6V544.6M148.80,85.6V544.6M144.60,85.6V544.6M140.40,85.6V544.6M136.20,85.6V544.6M132.00,85.6V544.6M127.80,85.6V544.6M123.60,85.6V544.6M119.40,85.6V544.6M115.20,85.6V544.6M111.00,85.6V544.6M106.80,85.6V544.6M102.60,85.6V544.6M98.40,85.6V544.6M94.20,85.6V544.6M90.00,85.6V544.6M85.80,85.6V544.6M81.60,85.6V544.6M77.40,85.6V544.6M73.20,85.6V544.6M69.00,85.6V544.6M543.60,85.6V544.6M547.80,85.6V544.6M552.00,85.6V544.6M556.20,85.6V544.6M560.40,85.6V544.6M564.60,85.6V544.6M568.80,85.6V544.6M573.00,85.6V544.6M577.20,85.6V544.6M581.40,85.6V544.6M585.60,85.6V544.6M589.80,85.6V544.6M594.00,85.6V544.6M598.20,85.6V544.6M602.40,85.6V544.6M606.60,85.6V544.6M610.80,85.6V544.6M615.00,85.6V544.6M619.20,85.6V544.6M623.40,85.6V544.6M627.60,85.6V544.6M631.80,85.6V544.6M636.00,85.6V544.6M640.20,85.6V544.6M644.40,85.6V544.6M648.60,85.6V544.6M652.80,85.6V544.6M657.00,85.6V544.6M661.20,85.6V544.6M665.40,85.6V544.6M68,87.20H668M68,91.40H668M68,95.60H668M68,99.80H668M68,104.00H668M68,108.20H668M68,112.40H668M68,116.60H668M68,120.80H668M68,125.00H668M68,129.20H668M68,133.40H668M68,137.60H668M68,141.80H668M68,146.00H668M68,150.20H668M68,154.40H668M68,158.60H668M68,162.80H668M68,167.00H668M68,171.20H668M68,175.40H668M68,179.60H668M68,183.80H668M68,188.00H668M68,192.20H668M68,196.40H668M68,200.60H668M68,204.80H668M68,209.00H668M68,213.20H668M68,217.40H668M68,221.60H668M68,225.80H668M68,230.00H668M68,234.20H668M68,238.40H668M68,242.60H668M68,246.80H668M68,251.00H668M68,255.20H668M68,259.40H668M68,263.60H668M68,267.80H668M68,272.00H668M68,276.20H668M68,280.40H668M68,284.60H668M68,288.80H668M68,293.00H668M68,297.20H668M68,301.40H668M68,305.60H668M68,309.80H668M68,314.00H668M68,318.20H668M68,322.40H668M68,326.60H668M68,330.80H668M68,335.00H668M68,339.20H668M68,343.40H668M68,347.60H668M68,351.80H668M68,356.00H668M68,360.20H668M68,364.40H668M68,368.60H668M68,372.80H668M68,377.00H668M68,381.20H668M68,385.40H668M68,389.60H668M68,393.80H668M68,398.00H668M68,402.20H668M68,406.40H668M68,410.60H668M68,414.80H668M68,419.00H668M68,423.20H668M68,427.40H668M68,431.60H668M68,435.80H668M68,440.00H668M68,444.20H668M68,448.40H668M68,452.60H668M68,456.80H668M68,461.00H668M68,465.20H668M68,469.40H668M68,473.60H668M68,477.80H668M68,482.00H668M68,486.20H668M68,490.40H668M68,494.60H668M68,498.80H668M68,503.00H668M68,507.20H668M68,511.40H668M68,515.60H668M68,519.80H668M68,524.00H668M68,528.20H668M68,532.40H668M68,536.60H668M68,540.80H668" fill="none" stroke="#f7f7f7" stroke-width="1" />
<rect x="668.00" y="85.60" width="200.00" height="459.00" fill="#808080" />
<path d="M72.6,549.2 L75.4,546.8 V551.6Z" fill="#777" />
<path d="M863.2,549.2 L860.4,546.8 V551.6Z" fill="#8a8a8a" />
<path d="M73.2,89.2 H195.6 Q197.0,89.2 196.4,90.4 L192.4,111.4 Q192.1,112.4 191.1,112.4 H68.8 Q67.6,112.4 68.1,111.4 L72.2,90.2 Q72.4,89.2 73.2,89.2Z" fill="#e8eaea" stroke="#d0d4d4" stroke-width="0.6" />
<rect x="235.20" y="93.30" width="63.60" height="23.50" fill="#e8eaea" stroke="#d0d4d4" stroke-width="0.8" rx="1.4" />
<rect x="335.30" y="97.30" width="55.30" height="22.90" fill="#e8eaea" stroke="#d0d4d4" stroke-width="0.8" rx="1.4" />
<rect x="411.40" y="100.10" width="68.40" height="23.40" fill="#e8eaea" stroke="#d0d4d4" stroke-width="0.8" rx="1.4" />
<rect x="178.60" y="143.60" width="49.90" height="22.90" fill="#e8eaea" stroke="#d0d4d4" stroke-width="0.8" rx="1.4" />
<rect x="270.50" y="150.70" width="59.80" height="23.30" fill="#e8eaea" stroke="#d0d4d4" stroke-width="0.8" rx="1.4" />
<rect x="95.20" y="211.60" width="68.30" height="23.50" fill="#e8eaea" stroke="#d0d4d4" stroke-width="0.8" rx="1.4" />
<rect x="191.30" y="215.30" width="67.70" height="23.60" fill="#e8eaea" stroke="#d0d4d4" stroke-width="0.8" rx="1.4" />
<rect x="385.90" y="238.50" width="122.70" height="23.80" fill="#e8eaea" stroke="#d0d4d4" stroke-width="0.8" rx="1.4" />
<rect x="90.70" y="260.50" width="69.00" height="23.50" fill="#e8eaea" stroke="#d0d4d4" stroke-width="0.8" rx="1.4" />
<rect x="186.40" y="266.40" width="77.20" height="22.80" fill="#e8eaea" stroke="#d0d4d4" stroke-width="0.8" rx="1.4" />
<rect x="395.80" y="283.40" width="48.10" height="23.20" fill="#e8eaea" stroke="#d0d4d4" stroke-width="0.8" rx="1.4" />
<rect x="394.40" y="328.10" width="53.90" height="23.40" fill="#e8eaea" stroke="#d0d4d4" stroke-width="0.8" rx="1.4" />
<rect x="89.80" y="381.70" width="45.80" height="23.30" fill="#e8eaea" stroke="#d0d4d4" stroke-width="0.8" rx="1.4" />
<rect x="275.60" y="433.60" width="49.80" height="23.40" fill="#e8eaea" stroke="#d0d4d4" stroke-width="0.8" rx="1.4" />
<rect x="71.90" y="479.00" width="71.80" height="23.60" fill="#e8eaea" stroke="#d0d4d4" stroke-width="0.8" rx="1.4" />
<rect x="174.50" y="479.90" width="99.90" height="23.50" fill="#e8eaea" stroke="#d0d4d4" stroke-width="0.8" rx="1.4" />
<rect x="253.60" y="513.60" width="126.00" height="22.70" fill="#e8eaea" stroke="#d0d4d4" stroke-width="0.8" rx="1.4" />
<clipPath id="cb"><rect x="68" y="85" width="600" height="459.6"/></clipPath><g clip-path="url(#cb)">
<rect x="135.60" y="526.30" width="62.70" height="25.70" fill="#e8eaea" stroke="#d0d4d4" stroke-width="0.6" rx="1.4" />
</g>
<path d="M69.6,96.2 Q120,94.5 189.8,96.2 L189.6,106.8 Q160,104.8 130,106.4 Q100,107.6 69.8,107.2 Z" fill="#e9f000" />
<path d="M270.4,156.8 Q300,154 328,155 Q336,156.5 335.4,164 Q335,171.5 326,171.8 Q300,168.5 285,166.8 Q275,166.2 270.4,165.6Z" fill="#e9f000" />
<g clip-path="url(#cb)">
<path d="M137.4,534.4 Q165,532.8 197.7,534.4 V546 H137.4Z" fill="#e9f000" />
</g>
<g transform="translate(73.00,93.90) scale(1.083)"><path d="M2.5,0.8 H8 L10,2.8 V11.2 H2.5 Z" fill="none" stroke="#55606a" stroke-width="0.5"/><rect x="0.8" y="6" width="11" height="5.8" fill="#f39a2b"/><rect x="0.8" y="5" width="4" height="1.5" fill="#f39a2b"/><rect x="0.8" y="6" width="11" height="2" fill="#f7b04a"/></g>
<text x="88.60" y="102.81" font-size="4.73" fill="#4a4a4a" >Ironton Broadsheet BW in from SRV-HOMFTP:</text>
<g transform="translate(239.70,98.10) scale(1.083)"><path d="M2.5,0.8 H8 L10,2.8 V11.2 H2.5 Z" fill="#fff" stroke="#8a9aa6" stroke-width="0.6"/><path d="M8,0.8 V2.8 H10" fill="none" stroke="#8a9aa6" stroke-width="0.5"/><rect x="1.5" y="6.5" width="9.5" height="5" fill="#f39a2b"/><path d="M0.5,6.2 H6.5" stroke="#2f3b42" stroke-width="1.4"/><path d="M4.0,3.6 L7.0,6.2 L4.0,8.8" fill="none" stroke="#2f3b42" stroke-width="1.4"/></g>
<text x="255.00" y="106.81" font-size="4.73" fill="#4a4a4a" >Move Source Files</text>
<g transform="translate(340.10,102.10) scale(1.083)"><circle cx="6" cy="6" r="4.9" fill="#fff" stroke="#9b1b4b" stroke-width="1.5"/><path d="M6,6 V1.9 A4.1,4.1 0 0 1 10.1,6Z" fill="#b4bec6"/><path d="M6,2.6 V6.2 H8.6" fill="none" stroke="#2f3b42" stroke-width="0.8"/><path d="M6,1.6 v0.9 M6,9.5 v0.9 M1.6,6 h0.9 M9.5,6 h0.9" stroke="#2f3b42" stroke-width="0.5"/></g>
<text x="355.70" y="110.49" font-size="4.68" fill="#4a4a4a" >Job Scheduler</text>
<g transform="translate(416.00,104.90) scale(1.083)"><path d="M1.2,1.5 L4.2,5.5 L2.6,11 Q5.5,12 6.8,9 L6.2,4.6 Z" fill="#7ab648"/><path d="M10.6,0.8 L7.8,5.6" stroke="#2f3b42" stroke-width="1.5"/><path d="M5.2,5.4 Q9,4.6 9.2,7.6 Q8.6,11.2 5.2,11 Z" fill="#2f3b42"/></g>
<text x="431.60" y="113.19" font-size="4.69" fill="#4a4a4a" >Clean Up Work Data</text>
<g transform="translate(183.15,148.15) scale(1.125)"><path d="M2.5,0.8 H8 L10,2.8 V11.2 H2.5 Z" fill="#fff" stroke="#9aa8b0" stroke-width="0.6"/><path d="M8,0.8 V2.8 H10" fill="none" stroke="#9aa8b0" stroke-width="0.5"/><text x="6.2" y="8.8" font-size="4" font-weight="bold" fill="#f39a2b" text-anchor="middle">PDF</text></g>
<text x="199.00" y="157.01" font-size="4.74" fill="#4a4a4a" >Create PDF</text>
<rect x="221.00" y="146.30" width="4.60" height="4.60" fill="#2a8ad0" />
<text x="223.30" y="149.81" font-size="3.40" fill="#fff" font-weight="bold" text-anchor="middle" >P</text>
<g transform="translate(274.95,155.75) scale(1.042)"><path d="M0.6,0.8 H7 L9.2,3 V11.4 H0.6 Z" fill="none" stroke="#6a767c" stroke-width="0.8"/><path d="M4.2,6.9 H10.8" stroke="#1a2228" stroke-width="1.54"/><path d="M8.05,4.04 L11.350000000000001,6.9 L8.05,9.760000000000002" fill="none" stroke="#1a2228" stroke-width="1.54"/></g>
<text x="291.00" y="164.19" font-size="4.68" fill="#4a4a4a" >Ironton Originals</text>
<g transform="translate(100.50,217.20) scale(1.000)"><path d="M6,0.5 Q10.5,6 10,8 A4,4 0 0 1 2,8 Q1.5,6 6,0.5Z" fill="#e4007c"/><text x="6" y="9" font-size="2.6" font-weight="bold" fill="#fff" text-anchor="middle">ABC</text></g>
<text x="115.00" y="225.10" font-size="4.71" fill="#4a4a4a" >Unify Color Names-1</text>
<g transform="translate(196.00,219.80) scale(1.167)"><path d="M4,0.8 H9 L11,2.8 V10 H4Z" fill="#fff" stroke="#9aa8b0" stroke-width="0.6"/><path d="M1,3 H6.5 L8,4.5 V11.5 H1Z" fill="#fff" stroke="#9aa8b0" stroke-width="0.6"/></g>
<text x="212.00" y="228.82" font-size="4.75" fill="#4a4a4a" >Modify Page Format</text>
<g transform="translate(390.95,242.85) scale(1.125)"><path d="M0.6,0.8 H7 L9.2,3 V11.4 H0.6 Z" fill="#fff" stroke="#9aa6ac" stroke-width="0.9"/><path d="M7,0.8 V3 H9.2" fill="none" stroke="#9aa6ac" stroke-width="0.6"/><path d="M4.2,6.9 H10.5" stroke="#2f3b42" stroke-width="1.47"/><path d="M7.875,4.17 L11.025,6.9 L7.875,9.63" fill="none" stroke="#2f3b42" stroke-width="1.47"/></g>
<text x="407.00" y="252.09" font-size="4.97" fill="#4a4a4a" >Export volprp: dropbox\ASURA Error Folder/</text>
<g transform="translate(95.40,265.70) scale(1.083)"><circle cx="6" cy="4" r="3" fill="#00aeef" opacity="0.95"/><circle cx="3.8" cy="7.8" r="3" fill="#fff200" opacity="0.95"/><circle cx="8.2" cy="7.8" r="3" fill="#ec008c" opacity="0.9"/><circle cx="6" cy="6.6" r="1.4" fill="#111"/></g>
<text x="110.90" y="273.60" font-size="4.72" fill="#4a4a4a" >Color Management-1</text>
<rect x="152.60" y="263.00" width="4.60" height="4.60" fill="#2a8ad0" />
<text x="154.90" y="266.51" font-size="3.40" fill="#fff" font-weight="bold" text-anchor="middle" >S</text>
<g transform="translate(191.50,270.70) scale(1.083)"><circle cx="7.5" cy="4.5" r="3.8" fill="#f2e21b"/><rect x="1" y="5" width="6.5" height="6.5" fill="#1f8ac8"/><path d="M4.5,5 H7.5 V7.8 A3.8,3.8 0 0 1 4.5,5Z" fill="#8cc850"/></g>
<text x="207.00" y="279.59" font-size="4.67" fill="#4a4a4a" >Flatten Transparencies-1</text>
<g transform="translate(400.80,289.40) scale(1.000)"><rect x="1.8" y="1.5" width="8.4" height="10" fill="#fff" stroke="#9b1b4b" stroke-width="1.2"/><rect x="4.5" y="0.6" width="3" height="1.6" fill="#2f3b42"/><path d="M3.5,4.5 h1 M3.5,6.8 h1 M3.5,9 h1" stroke="#7ab648" stroke-width="0.9"/><path d="M5.5,4.5 h3 M5.5,6.8 h3 M5.5,9 h3" stroke="#2f3b42" stroke-width="0.7"/></g>
<text x="415.80" y="296.78" font-size="4.64" fill="#4a4a4a" >Job History</text>
<g transform="translate(397.55,332.65) scale(1.125)"><path d="M0.6,0.8 H7 L9.2,3 V11.4 H0.6 Z" fill="#fff" stroke="#9aa6ac" stroke-width="0.9"/><path d="M7,0.8 V3 H9.2" fill="none" stroke="#9aa6ac" stroke-width="0.6"/><path d="M4.2,6.9 H10.5" stroke="#2f3b42" stroke-width="1.47"/><path d="M7.875,4.17 L11.025,6.9 L7.875,9.63" fill="none" stroke="#2f3b42" stroke-width="1.47"/></g>
<text x="414.50" y="341.80" font-size="4.71" fill="#4a4a4a" >Asura Rejects</text>
<g transform="translate(94.75,386.65) scale(1.042)"><path d="M3.5,7 L2.5,11.5 L4.5,10.5 L6,12 L7.5,10.5 L9.5,11.5 L8.5,7Z" fill="#f39a2b"/><circle cx="6" cy="5" r="4.5" fill="#4aa53a"/><path d="M6,2 L6.9,4 L9,4.2 L7.4,5.6 L7.9,7.8 L6,6.6 L4.1,7.8 L4.6,5.6 L3,4.2 L5.1,4Z" fill="#f2d21b"/></g>
<text x="110.00" y="394.99" font-size="4.67" fill="#4a4a4a" >Normalize</text>
<g transform="translate(280.05,438.35) scale(1.042)"><path d="M3.5,7 L2.5,11.5 L4.5,10.5 L6,12 L7.5,10.5 L9.5,11.5 L8.5,7Z" fill="#f39a2b"/><circle cx="6" cy="5" r="4.5" fill="#4aa53a"/><path d="M6,2 L6.9,4 L9,4.2 L7.4,5.6 L7.9,7.8 L6,6.6 L4.1,7.8 L4.6,5.6 L3,4.2 L5.1,4Z" fill="#f2d21b"/></g>
<text x="295.70" y="446.58" font-size="4.64" fill="#4a4a4a" >Normalize-2</text>
<rect x="318.40" y="435.90" width="4.60" height="4.60" fill="#2a8ad0" />
<text x="320.70" y="439.41" font-size="3.40" fill="#fff" font-weight="bold" text-anchor="middle" >S</text>
<g transform="translate(75.85,483.95) scale(1.125)"><path d="M0.6,0.8 H7 L9.2,3 V11.4 H0.6 Z" fill="#fff" stroke="#9aa6ac" stroke-width="0.9"/><path d="M7,0.8 V3 H9.2" fill="none" stroke="#9aa6ac" stroke-width="0.6"/><path d="M4.2,6.9 H10.5" stroke="#2f3b42" stroke-width="1.47"/><path d="M7.875,4.17 L11.025,6.9 L7.875,9.63" fill="none" stroke="#2f3b42" stroke-width="1.47"/></g>
<text x="92.20" y="492.60" font-size="4.70" fill="#4a4a4a" >Export Tearsheets Out</text>
<g transform="translate(178.35,484.75) scale(1.125)"><path d="M0.6,0.8 H7 L9.2,3 V11.4 H0.6 Z" fill="#fff" stroke="#9aa6ac" stroke-width="0.9"/><path d="M7,0.8 V3 H9.2" fill="none" stroke="#9aa6ac" stroke-width="0.6"/><path d="M4.2,6.9 H10.5" stroke="#2f3b42" stroke-width="1.47"/><path d="M7.875,4.17 L11.025,6.9 L7.875,9.63" fill="none" stroke="#2f3b42" stroke-width="1.47"/></g>
<text x="194.70" y="492.81" font-size="4.72" fill="#4a4a4a" >Export volprp: Queues/Reprints/out/</text>
<g transform="translate(258.15,518.05) scale(1.125)"><path d="M0.6,0.8 H7 L9.2,3 V11.4 H0.6 Z" fill="#fff" stroke="#9aa6ac" stroke-width="0.9"/><path d="M7,0.8 V3 H9.2" fill="none" stroke="#9aa6ac" stroke-width="0.6"/><path d="M4.2,6.9 H10.5" stroke="#2f3b42" stroke-width="1.47"/><path d="M7.875,4.17 L11.025,6.9 L7.875,9.63" fill="none" stroke="#2f3b42" stroke-width="1.47"/></g>
<text x="274.00" y="526.91" font-size="4.74" fill="#4a4a4a" >Export CTP Workflow Folder: B&amp;W Commercial/</text>
<g clip-path="url(#cb)">
<g transform="translate(140.50,531.50) scale(1.083)"><path d="M0.6,0.8 H7 L9.2,3 V11.4 H0.6 Z" fill="none" stroke="#6a767c" stroke-width="0.8"/><path d="M4.2,6.9 H10.8" stroke="#1a2228" stroke-width="1.54"/><path d="M8.05,4.04 L11.350000000000001,6.9 L8.05,9.760000000000002" fill="none" stroke="#1a2228" stroke-width="1.54"/></g>
<text x="155.00" y="540.11" font-size="4.73" fill="#4a4a4a" >Ironton Processed</text>
</g>
<path d="M264.2,94.0 A2.2,2.2 0 1 1 268.59999999999997,94.0 Q268.2,95.89999999999999 266.4,96.7 Q264.59999999999997,95.89999999999999 264.2,94.0Z" fill="#eceeee" stroke="#a0a6a6" stroke-width="0.55" />
<path d="M360.5,97.7 A2.2,2.2 0 1 1 364.9,97.7 Q364.5,99.6 362.7,100.4 Q360.9,99.6 360.5,97.7Z" fill="#eceeee" stroke="#a0a6a6" stroke-width="0.55" />
<path d="M442.8,100.5 A2.2,2.2 0 1 1 447.2,100.5 Q446.8,102.39999999999999 445,103.2 Q443.2,102.39999999999999 442.8,100.5Z" fill="#eceeee" stroke="#a0a6a6" stroke-width="0.55" />
<path d="M201.0,143.7 A2.2,2.2 0 1 1 205.39999999999998,143.7 Q205.0,145.6 203.2,146.4 Q201.39999999999998,145.6 201.0,143.7Z" fill="#eceeee" stroke="#a0a6a6" stroke-width="0.55" />
<path d="M297.40000000000003,151.2 A2.2,2.2 0 1 1 301.8,151.2 Q301.40000000000003,153.1 299.6,153.9 Q297.8,153.1 297.40000000000003,151.2Z" fill="#eceeee" stroke="#a0a6a6" stroke-width="0.55" />
<path d="M126.8,211.7 A2.2,2.2 0 1 1 131.2,211.7 Q130.8,213.6 129,214.4 Q127.2,213.6 126.8,211.7Z" fill="#eceeee" stroke="#a0a6a6" stroke-width="0.55" />
<path d="M223.20000000000002,215.7 A2.2,2.2 0 1 1 227.6,215.7 Q227.20000000000002,217.6 225.4,218.4 Q223.6,217.6 223.20000000000002,215.7Z" fill="#eceeee" stroke="#a0a6a6" stroke-width="0.55" />
<path d="M445.1,239.1 A2.2,2.2 0 1 1 449.5,239.1 Q449.1,241.0 447.3,241.8 Q445.5,241.0 445.1,239.1Z" fill="#eceeee" stroke="#a0a6a6" stroke-width="0.55" />
<path d="M123.1,260.7 A2.2,2.2 0 1 1 127.5,260.7 Q127.1,262.6 125.3,263.4 Q123.5,262.6 123.1,260.7Z" fill="#eceeee" stroke="#a0a6a6" stroke-width="0.55" />
<path d="M222.3,266.7 A2.2,2.2 0 1 1 226.7,266.7 Q226.3,268.6 224.5,269.4 Q222.7,268.6 222.3,266.7Z" fill="#eceeee" stroke="#a0a6a6" stroke-width="0.55" />
<path d="M417.2,283.7 A2.2,2.2 0 1 1 421.59999999999997,283.7 Q421.2,285.6 419.4,286.4 Q417.59999999999997,285.6 417.2,283.7Z" fill="#eceeee" stroke="#a0a6a6" stroke-width="0.55" />
<path d="M419.2,328.2 A2.2,2.2 0 1 1 423.59999999999997,328.2 Q423.2,330.1 421.4,330.9 Q419.59999999999997,330.1 419.2,328.2Z" fill="#eceeee" stroke="#a0a6a6" stroke-width="0.55" />
<path d="M110.5,382.2 A2.2,2.2 0 1 1 114.9,382.2 Q114.5,384.1 112.7,384.9 Q110.9,384.1 110.5,382.2Z" fill="#eceeee" stroke="#a0a6a6" stroke-width="0.55" />
<path d="M298.2,433.7 A2.2,2.2 0 1 1 302.59999999999997,433.7 Q302.2,435.6 300.4,436.4 Q298.59999999999997,435.6 298.2,433.7Z" fill="#eceeee" stroke="#a0a6a6" stroke-width="0.55" />
<path d="M105.1,479.2 A2.2,2.2 0 1 1 109.5,479.2 Q109.1,481.1 107.3,481.9 Q105.5,481.1 105.1,479.2Z" fill="#eceeee" stroke="#a0a6a6" stroke-width="0.55" />
<path d="M221.70000000000002,480.2 A2.2,2.2 0 1 1 226.1,480.2 Q225.70000000000002,482.1 223.9,482.9 Q222.1,482.1 221.70000000000002,480.2Z" fill="#eceeee" stroke="#a0a6a6" stroke-width="0.55" />
<path d="M313.8,513.7 A2.2,2.2 0 1 1 318.2,513.7 Q317.8,515.6 316,516.4 Q314.2,515.6 313.8,513.7Z" fill="#eceeee" stroke="#a0a6a6" stroke-width="0.55" />
<path d="M164.20000000000002,526.7 A2.2,2.2 0 1 1 168.6,526.7 Q168.20000000000002,528.6 166.4,529.4 Q164.6,528.6 164.20000000000002,526.7Z" fill="#eceeee" stroke="#a0a6a6" stroke-width="0.55" />
<path d="M130.30,112.00 L130.30,118.00 Q130.30,120.20 132.50,120.20 L198.60,120.20 Q200.80,120.20 200.80,118.00 L200.80,88.70 Q200.80,86.50 203.00,86.50 L264.20,86.50 Q266.40,86.50 266.40,88.70 L266.40,94.00" fill="none" stroke="#7db877" stroke-width="1.15" stroke-linejoin="round"/>
<path d="M251.00,116.00 L251.00,130.30 Q251.00,132.50 248.80,132.50 L205.40,132.50 Q203.20,132.50 203.20,134.70 L203.20,144.00" fill="none" stroke="#7db877" stroke-width="1.15" stroke-linejoin="round"/>
<path d="M251.00,130.00 L251.00,134.10 Q251.00,136.30 253.20,136.30 L297.40,136.30 Q299.60,136.30 299.60,138.50 L299.60,151.50" fill="none" stroke="#7db877" stroke-width="1.15" stroke-linejoin="round"/>
<path d="M349.00,119.20 L349.00,125.80 Q349.00,128.00 351.20,128.00 L396.70,128.00 Q398.90,128.00 398.90,125.80 L398.90,95.30 Q398.90,93.10 401.10,93.10 L442.80,93.10 Q445.00,93.10 445.00,95.30 L445.00,101.00" fill="none" stroke="#7db877" stroke-width="1.15" stroke-linejoin="round"/>
<path d="M186.60,166.00 L186.60,191.80 Q186.60,194.00 188.80,194.00 L223.20,194.00 Q225.40,194.00 225.40,196.20 L225.40,216.00" fill="none" stroke="#7db877" stroke-width="1.15" stroke-linejoin="round"/>
<path d="M202.80,238.00 L202.80,244.10 Q202.80,246.30 200.60,246.30 L170.20,246.30 Q168.00,246.30 168.00,244.10 L168.00,207.10 Q168.00,204.90 165.80,204.90 L131.20,204.90 Q129.00,204.90 129.00,207.10 L129.00,212.00" fill="none" stroke="#7db877" stroke-width="1.15" stroke-linejoin="round"/>
<path d="M106.30,234.00 L106.30,248.50 Q106.30,250.70 108.50,250.70 L123.10,250.70 Q125.30,250.70 125.30,252.90 L125.30,261.00" fill="none" stroke="#7db877" stroke-width="1.15" stroke-linejoin="round"/>
<path d="M101.90,283.00 L101.90,289.60 Q101.90,291.80 104.10,291.80 L163.30,291.80 Q165.50,291.80 165.50,289.60 L165.50,261.70 Q165.50,259.50 167.70,259.50 L222.30,259.50 Q224.50,259.50 224.50,261.70 L224.50,267.00" fill="none" stroke="#7db877" stroke-width="1.15" stroke-linejoin="round"/>
<path d="M199.00,288.40 L199.00,335.80 Q199.00,338.00 196.80,338.00 L114.90,338.00 Q112.70,338.00 112.70,340.20 L112.70,382.50" fill="none" stroke="#7db877" stroke-width="1.15" stroke-linejoin="round"/>
<path d="M199.00,330.00 L199.00,362.20 Q199.00,364.40 201.20,364.40 L297.10,364.40 Q299.30,364.40 299.30,366.60 L299.30,434.00" fill="none" stroke="#7db877" stroke-width="1.15" stroke-linejoin="round"/>
<path d="M97.60,404.00 L97.60,465.80 Q97.60,468.00 99.80,468.00 L164.20,468.00 Q166.40,468.00 166.40,470.20 L166.40,527.00" fill="none" stroke="#7db877" stroke-width="1.15" stroke-linejoin="round"/>
<path d="M97.60,440.00 L97.60,442.30 Q97.60,444.50 99.80,444.50 L105.10,444.50 Q107.30,444.50 107.30,446.70 L107.30,479.50" fill="none" stroke="#7db877" stroke-width="1.15" stroke-linejoin="round"/>
<path d="M97.60,440.00 L97.60,443.80 Q97.60,446.00 99.80,446.00 L221.70,446.00 Q223.90,446.00 223.90,448.20 L223.90,480.50" fill="none" stroke="#7db877" stroke-width="1.15" stroke-linejoin="round"/>
<path d="M283.30,456.00 L283.30,485.60 Q283.30,487.80 285.50,487.80 L313.80,487.80 Q316.00,487.80 316.00,490.00 L316.00,514.00" fill="none" stroke="#7db877" stroke-width="1.15" stroke-linejoin="round"/>
<path d="M407.30,306.00 L407.30,317.80 Q407.30,320.00 409.50,320.00 L419.20,320.00 Q421.40,320.00 421.40,322.20 L421.40,328.50" fill="none" stroke="#7db877" stroke-width="1.15" stroke-linejoin="round"/>
<path d="M219.80,166.00 L219.80,203.30 Q219.80,205.50 222.00,205.50 L445.10,205.50 Q447.30,205.50 447.30,207.70 L447.30,239.40" fill="none" stroke="#e46a7c" stroke-width="1.15" stroke-linejoin="round"/>
<path d="M247.30,238.00 L247.30,244.40 Q247.30,246.60 249.50,246.60 L347.60,246.60 Q349.80,246.60 349.80,244.40 L349.80,234.40 Q349.80,232.20 352.00,232.20 L445.40,232.20 Q447.30,232.20 447.30,234.10 L447.30,236.00" fill="none" stroke="#e46a7c" stroke-width="1.15" stroke-linejoin="round"/>
<path d="M250.30,288.40 L250.30,293.80 Q250.30,296.00 252.50,296.00 L348.70,296.00 Q350.90,296.00 350.90,293.80 L350.90,232.20" fill="none" stroke="#e46a7c" stroke-width="1.15" stroke-linejoin="round"/>
<path d="M128.00,404.00 L128.00,409.80 Q128.00,412.00 130.20,412.00 L287.20,412.00 Q289.40,412.00 289.40,409.80 L289.40,234.40 Q289.40,232.20 291.60,232.20 L300.00,232.20" fill="none" stroke="#e46a7c" stroke-width="1.15" stroke-linejoin="round"/>
<path d="M316.70,456.00 L316.70,461.80 Q316.70,464.00 318.90,464.00 L382.40,464.00 Q384.60,464.00 384.60,461.80 L384.60,234.40 Q384.60,232.20 386.80,232.20 L390.00,232.20" fill="none" stroke="#e46a7c" stroke-width="1.15" stroke-linejoin="round"/>
<path d="M289.40,232.20 L447.30,232.20" fill="none" stroke="#e46a7c" stroke-width="1.15" stroke-linejoin="round"/>
<path d="M282.40,116.00 L282.40,122.10 Q282.40,124.30 284.60,124.30 L322.30,124.30 Q324.50,124.30 324.50,122.10 L324.50,92.80 Q324.50,90.60 326.70,90.60 L360.50,90.60 Q362.70,90.60 362.70,92.80 L362.70,98.00" fill="none" stroke="#555a5a" stroke-width="1.2" stroke-linejoin="round"/>
<path d="M446.60,261.00 L446.60,272.80 Q446.60,275.00 444.40,275.00 L421.40,275.00 Q419.20,275.00 419.20,277.20 L419.20,283.50" fill="none" stroke="#555a5a" stroke-width="1.2" stroke-linejoin="round"/>
<circle cx="130.30" cy="112.00" r="2.40" fill="#b8c4b8" stroke="#8d9393" stroke-width="0.8" />
<circle cx="130.30" cy="112.00" r="1.45" fill="#4a9a40" />
<circle cx="251.00" cy="116.10" r="2.40" fill="#b8c4b8" stroke="#8d9393" stroke-width="0.8" />
<circle cx="251.00" cy="116.10" r="1.45" fill="#4a9a40" />
<circle cx="282.40" cy="116.00" r="2.40" fill="#b8bcbc" stroke="#8d9393" stroke-width="0.8" />
<circle cx="282.40" cy="116.00" r="1.45" fill="#2a2a2a" />
<circle cx="349.00" cy="119.20" r="2.40" fill="#b8c4b8" stroke="#8d9393" stroke-width="0.8" />
<circle cx="349.00" cy="119.20" r="1.45" fill="#4a9a40" />
<circle cx="376.50" cy="119.50" r="2.40" fill="#ffffff" stroke="#a2a8a8" stroke-width="0.7" />
<circle cx="186.60" cy="165.70" r="2.40" fill="#b8c4b8" stroke="#8d9393" stroke-width="0.8" />
<circle cx="186.60" cy="165.70" r="1.45" fill="#4a9a40" />
<circle cx="203.20" cy="165.70" r="2.40" fill="#ffffff" stroke="#a2a8a8" stroke-width="0.7" />
<circle cx="219.80" cy="165.70" r="2.40" fill="#d4bcbc" stroke="#939090" stroke-width="0.8" />
<circle cx="219.80" cy="165.70" r="1.45" fill="#e02c44" />
<circle cx="280.50" cy="173.20" r="2.40" fill="#ffffff" stroke="#a2a8a8" stroke-width="0.7" />
<circle cx="300.00" cy="173.20" r="2.40" fill="#ffffff" stroke="#a2a8a8" stroke-width="0.7" />
<circle cx="320.00" cy="173.20" r="2.40" fill="#ffffff" stroke="#a2a8a8" stroke-width="0.7" />
<circle cx="106.30" cy="234.20" r="2.40" fill="#b8c4b8" stroke="#8d9393" stroke-width="0.8" />
<circle cx="106.30" cy="234.20" r="1.45" fill="#4a9a40" />
<circle cx="129.00" cy="234.20" r="2.40" fill="#ffffff" stroke="#a2a8a8" stroke-width="0.7" />
<circle cx="151.80" cy="234.20" r="2.40" fill="#ffffff" stroke="#a2a8a8" stroke-width="0.7" />
<circle cx="202.80" cy="237.90" r="2.40" fill="#b8c4b8" stroke="#8d9393" stroke-width="0.8" />
<circle cx="202.80" cy="237.90" r="1.45" fill="#4a9a40" />
<circle cx="225.40" cy="237.90" r="2.40" fill="#ffffff" stroke="#a2a8a8" stroke-width="0.7" />
<circle cx="247.30" cy="237.90" r="2.40" fill="#d4bcbc" stroke="#939090" stroke-width="0.8" />
<circle cx="247.30" cy="237.90" r="1.45" fill="#e02c44" />
<circle cx="406.50" cy="261.00" r="2.40" fill="#ffffff" stroke="#a2a8a8" stroke-width="0.7" />
<circle cx="446.60" cy="261.00" r="2.40" fill="#b8bcbc" stroke="#8d9393" stroke-width="0.8" />
<circle cx="446.60" cy="261.00" r="1.45" fill="#2a2a2a" />
<circle cx="488.00" cy="261.00" r="2.40" fill="#ffffff" stroke="#a2a8a8" stroke-width="0.7" />
<circle cx="101.90" cy="283.00" r="2.40" fill="#b8c4b8" stroke="#8d9393" stroke-width="0.8" />
<circle cx="101.90" cy="283.00" r="1.45" fill="#4a9a40" />
<circle cx="125.30" cy="283.00" r="2.40" fill="#ffffff" stroke="#a2a8a8" stroke-width="0.7" />
<circle cx="148.00" cy="283.00" r="2.40" fill="#ffffff" stroke="#a2a8a8" stroke-width="0.7" />
<circle cx="199.00" cy="288.40" r="2.40" fill="#b8c4b8" stroke="#8d9393" stroke-width="0.8" />
<circle cx="199.00" cy="288.40" r="1.45" fill="#4a9a40" />
<circle cx="224.90" cy="288.40" r="2.40" fill="#ffffff" stroke="#a2a8a8" stroke-width="0.7" />
<circle cx="250.30" cy="288.40" r="2.40" fill="#d4bcbc" stroke="#939090" stroke-width="0.8" />
<circle cx="250.30" cy="288.40" r="1.45" fill="#e02c44" />
<circle cx="407.40" cy="305.80" r="2.40" fill="#b8c4b8" stroke="#8d9393" stroke-width="0.8" />
<circle cx="407.40" cy="305.80" r="1.45" fill="#4a9a40" />
<circle cx="431.60" cy="305.80" r="2.40" fill="#ffffff" stroke="#a2a8a8" stroke-width="0.7" />
<circle cx="403.40" cy="350.60" r="2.40" fill="#ffffff" stroke="#a2a8a8" stroke-width="0.7" />
<circle cx="421.40" cy="350.60" r="2.40" fill="#ffffff" stroke="#a2a8a8" stroke-width="0.7" />
<circle cx="439.40" cy="350.60" r="2.40" fill="#ffffff" stroke="#a2a8a8" stroke-width="0.7" />
<circle cx="97.30" cy="404.00" r="2.40" fill="#b8c4b8" stroke="#8d9393" stroke-width="0.8" />
<circle cx="97.30" cy="404.00" r="1.45" fill="#4a9a40" />
<circle cx="112.70" cy="404.00" r="2.40" fill="#ffffff" stroke="#a2a8a8" stroke-width="0.7" />
<circle cx="128.00" cy="404.00" r="2.40" fill="#d4bcbc" stroke="#939090" stroke-width="0.8" />
<circle cx="128.00" cy="404.00" r="1.45" fill="#e02c44" />
<circle cx="283.30" cy="455.80" r="2.40" fill="#b8c4b8" stroke="#8d9393" stroke-width="0.8" />
<circle cx="283.30" cy="455.80" r="1.45" fill="#4a9a40" />
<circle cx="300.40" cy="455.80" r="2.40" fill="#ffffff" stroke="#a2a8a8" stroke-width="0.7" />
<circle cx="316.70" cy="455.80" r="2.40" fill="#d4bcbc" stroke="#939090" stroke-width="0.8" />
<circle cx="316.70" cy="455.80" r="1.45" fill="#e02c44" />
<circle cx="83.80" cy="501.50" r="2.40" fill="#ffffff" stroke="#a2a8a8" stroke-width="0.7" />
<circle cx="107.30" cy="501.50" r="2.40" fill="#ffffff" stroke="#a2a8a8" stroke-width="0.7" />
<circle cx="131.00" cy="501.50" r="2.40" fill="#ffffff" stroke="#a2a8a8" stroke-width="0.7" />
<circle cx="190.70" cy="502.00" r="2.40" fill="#ffffff" stroke="#a2a8a8" stroke-width="0.7" />
<circle cx="223.90" cy="502.00" r="2.40" fill="#ffffff" stroke="#a2a8a8" stroke-width="0.7" />
<circle cx="257.10" cy="502.00" r="2.40" fill="#ffffff" stroke="#a2a8a8" stroke-width="0.7" />
<circle cx="274.60" cy="535.30" r="2.40" fill="#ffffff" stroke="#a2a8a8" stroke-width="0.7" />
<circle cx="316.00" cy="535.30" r="2.40" fill="#ffffff" stroke="#a2a8a8" stroke-width="0.7" />
<circle cx="358.10" cy="535.30" r="2.40" fill="#ffffff" stroke="#a2a8a8" stroke-width="0.7" />
<g transform="translate(254.40,119.60) rotate(90)">
<text x="0.00" y="2.00" font-size="5.87" fill="#7db877" >ok</text>
</g>
<text x="286.00" y="122.83" font-size="4.80" fill="#555a5a" >log</text>
<text x="352.00" y="125.91" font-size="5.04" fill="#7db877" >out</text>
<g transform="translate(191.00,170.00) rotate(90)">
<text x="0.00" y="1.56" font-size="4.60" fill="#7db877" >Output</text>
</g>
<g transform="translate(224.20,170.00) rotate(90)">
<text x="0.00" y="1.56" font-size="4.59" fill="#e46a7c" >Error</text>
</g>
<g transform="translate(110.30,238.20) rotate(90)">
<text x="0.00" y="1.56" font-size="4.60" fill="#7db877" >Output</text>
</g>
<text x="185.20" y="244.81" font-size="4.73" fill="#7db877" >Output</text>
<text x="251.00" y="245.16" font-size="4.59" fill="#e46a7c" >Error</text>
<g transform="translate(450.80,265.00) rotate(90)">
<text x="0.00" y="1.68" font-size="4.95" fill="#555a5a" >log</text>
</g>
<text x="106.00" y="289.81" font-size="4.73" fill="#7db877" >Output</text>
<g transform="translate(203.20,293.00) rotate(90)">
<text x="0.00" y="1.56" font-size="4.60" fill="#7db877" >Output</text>
</g>
<text x="254.00" y="295.76" font-size="4.59" fill="#e46a7c" >Error</text>
<g transform="translate(410.80,310.00) rotate(90)">
<text x="0.00" y="2.00" font-size="5.87" fill="#7db877" >ok</text>
</g>
<text x="131.00" y="410.82" font-size="4.77" fill="#e46a7c" >Error</text>
<g transform="translate(101.20,408.00) rotate(90)">
<text x="0.00" y="1.56" font-size="4.60" fill="#7db877" >Output</text>
</g>
<text x="320.00" y="462.82" font-size="4.77" fill="#e46a7c" >Error</text>
<g transform="translate(288.00,460.00) rotate(90)">
<text x="0.00" y="1.56" font-size="4.60" fill="#7db877" >Output</text>
</g>
</svg>
</body></html>
